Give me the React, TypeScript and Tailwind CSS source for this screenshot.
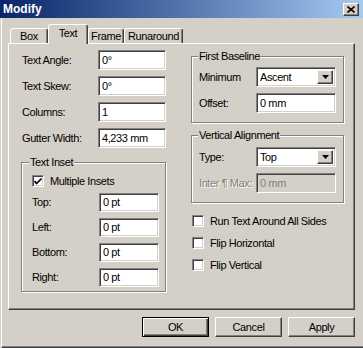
import React from 'react';

const raised =
  'border border-t-white border-l-white border-r-[#404040] border-b-[#404040] shadow-[inset_-1px_-1px_0_#808080]';
const sunken =
  'border border-t-[#808080] border-l-[#808080] border-r-white border-b-white shadow-[inset_1px_1px_0_#404040,inset_-1px_-1px_0_#d4d0c8]';

const TextBox: React.FC<{ value: string; width: string; height?: string; disabled?: boolean }> = ({
  value,
  width,
  height = 'h-[20px]',
  disabled,
}) => (
  <div
    className={`${sunken} ${width} ${height} flex items-center pl-[3px] ${
      disabled ? 'bg-[#d4d0c8] text-[#808080]' : 'bg-white text-black'
    }`}
  >
    {value}
  </div>
);

const Select: React.FC<{ value: string }> = ({ value }) => (
  <div className={`${sunken} w-[80px] h-[20px] bg-white flex items-center p-[2px]`}>
    <span className="flex-1 pl-[1px]">{value}</span>
    <div className={`${raised} w-[16px] h-full bg-[#d4d0c8] flex items-center justify-center`}>
      <svg width="7" height="4" viewBox="0 0 7 4">
        <path d="M0 0h7L3.5 4z" fill="#000" />
      </svg>
    </div>
  </div>
);

const Check: React.FC<{ checked?: boolean; label: string }> = ({ checked, label }) => (
  <div className="flex items-center h-[14px] gap-[6px]">
    <div className={`${sunken} w-[12px] h-[12px] bg-white flex items-center justify-center`}>
      {checked && (
        <svg width="8" height="7" viewBox="0 0 8 7">
          <path d="M0.5 3l2 2.5L7.5 0.5" stroke="#000" strokeWidth="1.6" fill="none" />
        </svg>
      )}
    </div>
    <span>{label}</span>
  </div>
);

const Group: React.FC<{ title: string; className?: string; legendClass: string; children: React.ReactNode }> = ({
  title,
  className,
  legendClass,
  children,
}) => (
  <fieldset
    className={`border border-[#808080] shadow-[1px_1px_0_white,inset_1px_1px_0_white] ${className ?? ''}`}
  >
    <legend className={`${legendClass} px-[1px] bg-[#d4d0c8] leading-[13px]`}>{title}</legend>
    {children}
  </fieldset>
);

const Row: React.FC<{ label: string; labelWidth: string; children: React.ReactNode; disabled?: boolean }> = ({
  label,
  labelWidth,
  children,
  disabled,
}) => (
  <div className="flex items-center">
    <span
      className={`${labelWidth} ${disabled ? 'text-[#808080] [text-shadow:1px_1px_0_white]' : ''}`}
    >
      {label}
    </span>
    {children}
  </div>
);

const tabs = [
  { name: 'Box', w: 'w-[38px]' },
  { name: 'Text', w: 'w-[40px]', active: true },
  { name: 'Frame', w: 'w-[36px]' },
  { name: 'Runaround', w: 'w-[59px]' },
];

export default function App() {
  return (
    <div
      className="w-[363px] h-[348px] bg-[#d4d0c8] flex flex-col text-[11px] tracking-[-0.4px] text-black select-none"
      style={{ fontFamily: '"Liberation Sans", Arial, sans-serif' }}
    >
      {/* title bar */}
      <div className="h-[18px] flex items-center justify-between pl-[3px] pr-[4px] bg-gradient-to-r from-[#0a246a] to-[#a6caf0]">
        <span className="text-white font-bold text-[12px] tracking-normal">Modify</span>
        <div className={`${raised} w-[16px] h-[13px] bg-[#d4d0c8] flex items-center justify-center`}>
          <svg width="8" height="7" viewBox="0 0 8 7">
            <path d="M0.5 0.5l7 6M7.5 0.5l-7 6" stroke="#000" strokeWidth="1.6" />
          </svg>
        </div>
      </div>

      <div className="flex-1 flex flex-col ml-[1px] border-l border-l-white border-b border-b-[#404040] shadow-[inset_0_-1px_0_#808080] pl-[6px]">
        {/* tabs */}
        <div className="flex items-end h-[19px] mt-[6px] ml-[2px]">
          {tabs.map((t) => (
            <div
              key={t.name}
              className={`${t.w} flex items-center justify-center border-t border-l border-white border-r border-r-[#404040] rounded-t-[3px] shadow-[inset_-1px_0_0_#808080] bg-[#d4d0c8] ${
                t.active ? 'h-[20px] -mb-[1px] relative z-10 pb-[3px]' : 'h-[15px]'
              }`}
            >
              {t.name}
            </div>
          ))}
        </div>

        {/* panel */}
        <div className={`${raised} w-[347px] h-[267px] flex pl-[12px] pt-[6px] gap-[25px]`}>
          {/* left column */}
          <div className="w-[145px] flex flex-col">
            <div className="flex flex-col gap-[6px] pl-[1px]">
              <Row label="Text Angle:" labelWidth="w-[76px]">
                <TextBox value="0°" width="w-[68px]" />
              </Row>
              <Row label="Text Skew:" labelWidth="w-[76px]">
                <TextBox value="0°" width="w-[68px]" />
              </Row>
              <Row label="Columns:" labelWidth="w-[76px]">
                <TextBox value="1" width="w-[68px]" />
              </Row>
              <Row label="Gutter Width:" labelWidth="w-[76px]">
                <TextBox value="4,233 mm" width="w-[68px]" />
              </Row>
            </div>

            <Group title="Text Inset" legendClass="-ml-[3px]" className="mt-[8px] pl-[10px] pt-[5px] pb-[4px]">
              <Check checked label="Multiple Insets" />
              <div className="flex flex-col gap-[6px] mt-[5px]">
                <Row label="Top:" labelWidth="w-[67px]">
                  <TextBox value="0 pt" width="w-[60px]" height="h-[19px]" />
                </Row>
                <Row label="Left:" labelWidth="w-[67px]">
                  <TextBox value="0 pt" width="w-[60px]" height="h-[19px]" />
                </Row>
                <Row label="Bottom:" labelWidth="w-[67px]">
                  <TextBox value="0 pt" width="w-[60px]" height="h-[19px]" />
                </Row>
                <Row label="Right:" labelWidth="w-[67px]">
                  <TextBox value="0 pt" width="w-[60px]" height="h-[19px]" />
                </Row>
              </div>
            </Group>
          </div>

          {/* right column */}
          <div className="w-[153px] flex flex-col">
            <Group title="First Baseline" legendClass="-ml-[1px]" className="pl-[7px] pt-[4px] pb-[9px]">
              <Row label="Minimum" labelWidth="w-[57px]">
                <Select value="Ascent" />
              </Row>
              <div className="mt-[6px]">
                <Row label="Offset:" labelWidth="w-[57px]">
                  <TextBox value="0 mm" width="w-[80px]" />
                </Row>
              </div>
            </Group>

            <Group
              title="Vertical Alignment"
              legendClass="-ml-[1px]"
              className="mt-[6px] pl-[7px] pt-[5px] pb-[9px]"
            >
              <Row label="Type:" labelWidth="w-[57px]">
                <Select value="Top" />
              </Row>
              <div className="mt-[6px]">
                <Row label="Inter ¶ Max:" labelWidth="w-[57px]" disabled>
                  <TextBox value="0 mm" width="w-[80px]" disabled />
                </Row>
              </div>
            </Group>

            <div className="flex flex-col gap-[8px] mt-[11px] pl-[1px]">
              <Check label="Run Text Around All Sides" />
              <Check label="Flip Horizontal" />
              <Check label="Flip Vertical" />
            </div>
          </div>
        </div>

        {/* buttons */}
        <div className="flex gap-[6px] mt-[7px] w-[347px] justify-end">
          <div className="w-[67px] h-[20px] border border-black shadow-[inset_1px_1px_0_white,inset_-1px_-1px_0_#404040,inset_-2px_-2px_0_#808080] flex items-center justify-center">
            OK
          </div>
          <div className={`${raised} w-[67px] h-[20px] flex items-center justify-center`}>Cancel</div>
          <div className={`${raised} w-[67px] h-[20px] flex items-center justify-center`}>Apply</div>
        </div>
      </div>
    </div>
  );
}
